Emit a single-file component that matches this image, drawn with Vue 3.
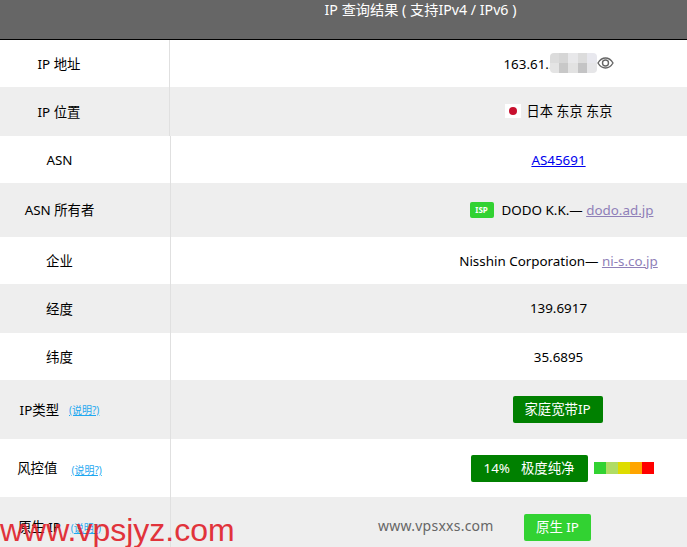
<script setup>
const pixelCols = ['#dcdcdc', '#d6d6d6', '#e8e8ea', '#dcdcdc', '#e8e8ee']
const pixelColsB = ['#e4e4e4', '#c8c8c8', '#e2e2e2', '#c4c4c5', '#e6e6e8']
const meter = ['#32d232', '#b0dc64', '#dedc00', '#ffa500', '#ff0000']
</script>

<template>
  <div class="page">
    <div class="head"><span>IP 查询结果 ( 支持IPv4 / IPv6 )</span></div>
    <div class="table">
      <div class="row narrow h47">
        <div class="key">IP 地址</div>
        <div class="val">
          <span class="ip">163.61..</span>
          <span class="mosaic">
            <span class="mline"><i v-for="(c, i) in pixelCols" :key="i" :style="{ background: c }"></i></span>
            <span class="mline"><i v-for="(c, i) in pixelColsB" :key="i" :style="{ background: c }"></i></span>
          </span>
          <svg class="eye" width="17" height="14" viewBox="0 0 17 14" fill="none" stroke="#666" stroke-width="1.4">
            <path d="M1 7C3 3.6 5.6 2 8.5 2S14 3.6 16 7c-2 3.4-4.6 5-7.500 5S3 10.400 1 7Z" />
            <circle cx="8.500" cy="7" r="3" />
          </svg>
        </div>
      </div>
      <div class="row narrow alt h49">
        <div class="key">IP 位置</div>
        <div class="val up cjk">
          <svg class="flag" width="16" height="14" viewBox="0 0 16 14">
            <rect width="16" height="14" fill="#fff" />
            <circle cx="8" cy="7" r="4" fill="#c8102e" />
          </svg>
          <span>日本 东京 东京</span>
        </div>
      </div>
      <div class="row h47">
        <div class="key latin">ASN</div>
        <div class="val"><a class="link">AS45691</a></div>
      </div>
      <div class="row alt h54">
        <div class="key">ASN 所有者</div>
        <div class="val isp-row">
          <span class="isp">ISP</span>
          <span>DODO K.K.— <a class="visited">dodo.ad.jp</a></span>
        </div>
      </div>
      <div class="row h47">
        <div class="key">企业</div>
        <div class="val"><span>Nisshin Corporation— <a class="visited">ni-s.co.jp</a></span></div>
      </div>
      <div class="row alt h49">
        <div class="key">经度</div>
        <div class="val up">139.6917</div>
      </div>
      <div class="row h47">
        <div class="key">纬度</div>
        <div class="val">35.6895</div>
      </div>
      <div class="row alt h59">
        <div class="key"><span>IP类型</span><a class="help">(说明?)</a></div>
        <div class="val left"><span class="btn dark w90">家庭宽带IP</span></div>
      </div>
      <div class="row h58">
        <div class="key wide"><span>风控值</span><a class="help low">(说明?)</a></div>
        <div class="val shift">
          <span class="btn dark w117"><span>14%</span><span>极度纯净</span></span>
          <span class="meter"><i v-for="c in meter" :key="c" :style="{ background: c }"></i></span>
        </div>
      </div>
      <div class="row alt h60">
        <div class="key"><span>原生 IP</span><a class="help">(说明?)</a></div>
        <div class="val left"><span class="btn bright">原生 IP</span></div>
      </div>
    </div>
    <div class="mark-grey">www.vpsxxs.com</div>
    <div class="mark-red">www.vpsjyz.com</div>
  </div>
</template>

<style>
html, body { margin: 0; background: #fff; }
</style>

<style scoped>
.page {
  position: relative;
  width: 687px;
  height: 547px;
  overflow: hidden;
  font-family: "Noto Sans", "Noto Sans CJK SC", sans-serif;
  font-size: 13.4px;
  color: #000;
}
.head {
  height: 39px;
  background: #666;
  border-bottom: 1px solid #000;
  color: #fff;
  font-size: 14.2px;
  display: flex;
  justify-content: center;
  padding-left: 154px;
}
.head span { line-height: 19px; }
.row { display: flex; background: #fff; }
.alt { background: #eee; }
.h47 { height: 47px; }
.h49 { height: 49px; }
.h54 { height: 54px; }
.h58 { height: 58px; }
.h59 { height: 59px; }
.h60 { height: 60px; }
.key {
  flex: 0 0 171px;
  box-sizing: border-box;
  padding-right: 51px;
  padding-bottom: 2px;
  border-right: 1px solid #e0e0e0;
  display: flex;
  justify-content: center;
  align-items: center;
  gap: 10px;
  white-space: nowrap;
}
.latin { padding-bottom: 0; }
.narrow .key { flex-basis: 170px; }
.wide { gap: 14px; }
.val {
  flex: 1;
  padding-left: 258px;
  margin-right: -1px;
  display: flex;
  justify-content: center;
  align-items: center;
  white-space: nowrap;
}
.narrow .val { padding-left: 259px; }
.up { padding-bottom: 2px; }
.cjk { font-size: 13.2px; }
.isp-row { padding-left: 264px; }
.left { padding-left: 256px; }
.shift { padding-left: 265px; }
.mosaic {
  display: flex;
  flex-direction: column;
  width: 47px;
  height: 20px;
  margin: 0 0 2px -3px;
  border-radius: 4px;
  overflow: hidden;
}
.mline { display: flex; flex: 1; }
.mline i { flex: 1; }
.eye { margin-bottom: 1px; }
.flag { margin-right: 6px; }
.link { color: #0000ee; text-decoration: underline; }
.visited { color: #8f7fb8; text-decoration: underline; }
.help {
  color: #1fa8f0;
  font-size: 10px;
  text-decoration: underline;
  margin-top: 2px;
}
.low { margin-top: 4px; }
.isp {
  background: #32d232;
  color: #fff;
  font-size: 8px;
  font-weight: 700;
  width: 24px;
  height: 16px;
  line-height: 16px;
  text-align: center;
  border-radius: 2px;
  margin-right: 8px;
}
.btn {
  color: #fff;
  height: 27px;
  line-height: 26px;
  border-radius: 2px;
  display: inline-flex;
  justify-content: center;
  gap: 11px;
  box-sizing: border-box;
}
.dark { background: #008000; }
.bright { background: #32d232; width: 67px; }
.w90 { width: 90px; }
.w117 { width: 117px; }
.meter { display: flex; width: 60px; height: 12px; margin-left: 6px; }
.meter i { flex: 1; }
.mark-grey {
  position: absolute;
  left: 378px;
  top: 516px;
  color: #666;
  font-size: 14px;
  letter-spacing: 0.25px;
}
.mark-red {
  position: absolute;
  left: 0;
  top: 512px;
  color: #e0242c;
  opacity: .92;
  font-family: "Liberation Sans", sans-serif;
  font-size: 32px;
  white-space: nowrap;
}
</style>
